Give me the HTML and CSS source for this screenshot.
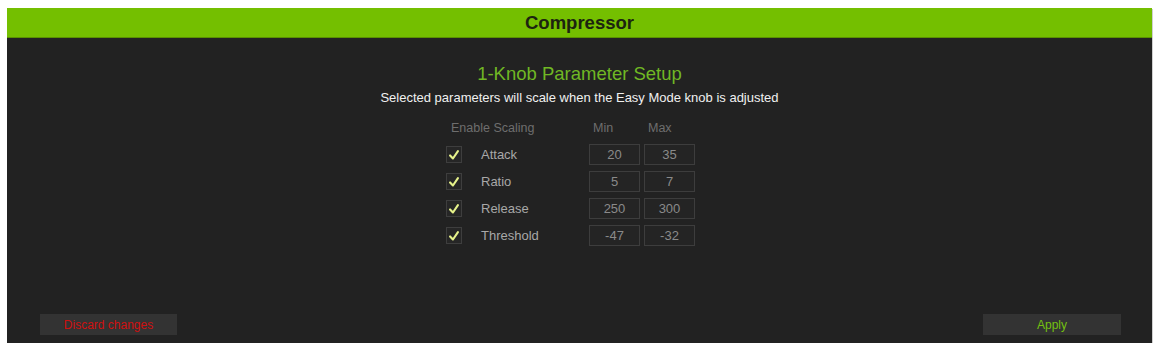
FILE: index.html
```html
<!DOCTYPE html>
<html>
<head>
<meta charset="utf-8">
<link rel="stylesheet" href="styles.css">
</head>
<body>
<div class="panel">
  <div class="header">Compressor</div>
  <div class="content">
    <h1 class="title">1-Knob Parameter Setup</h1>
    <p class="subtitle">Selected parameters will scale when the Easy Mode knob is adjusted</p>
    <div class="table-wrap">
      <div class="table">
        <div class="th th-enable">Enable Scaling</div>
        <div class="th th-min">Min</div>
        <div class="th th-max">Max</div>

        <div class="check"><svg viewBox="0 0 16 16"><path d="M3.5 8.5 L6.8 12 L12.5 3.5" /></svg></div>
        <div class="label">Attack</div>
        <div class="val val-min">20</div>
        <div class="val val-max">35</div>

        <div class="check"><svg viewBox="0 0 16 16"><path d="M3.5 8.5 L6.8 12 L12.5 3.5" /></svg></div>
        <div class="label">Ratio</div>
        <div class="val val-min">5</div>
        <div class="val val-max">7</div>

        <div class="check"><svg viewBox="0 0 16 16"><path d="M3.5 8.5 L6.8 12 L12.5 3.5" /></svg></div>
        <div class="label">Release</div>
        <div class="val val-min">250</div>
        <div class="val val-max">300</div>

        <div class="check"><svg viewBox="0 0 16 16"><path d="M3.5 8.5 L6.8 12 L12.5 3.5" /></svg></div>
        <div class="label">Threshold</div>
        <div class="val val-min">-47</div>
        <div class="val val-max">-32</div>
      </div>
    </div>
  </div>
  <div class="footer">
    <button class="btn btn-discard">Discard changes</button>
    <button class="btn btn-apply">Apply</button>
  </div>
</div>
</body>
</html>
```
FILE: styles.css
```css
html, body {
  margin: 0;
  padding: 0;
  background: #ffffff;
}
body {
  font-family: "Liberation Sans", Arial, sans-serif;
}
.panel {
  margin: 8px 5px 0 7px;
  width: 1145px;
  height: 335px;
  background: #222222;
  display: flex;
  flex-direction: column;
  box-shadow: 1px 1px 0 #cfcfcf;
}
.header {
  height: 30px;
  background: #74bf00;
  color: #1c2410;
  font-weight: bold;
  font-size: 18.5px;
  display: flex;
  align-items: center;
  justify-content: center;
  border-bottom: 1px solid #5a9200;
  box-sizing: border-box;
}
.content {
  flex: 1;
  display: flex;
  flex-direction: column;
  align-items: center;
}
.title {
  margin: 25px 0 0 0;
  font-weight: normal;
  font-size: 18.5px;
  line-height: 21px;
  color: #70b824;
}
.subtitle {
  margin: 6px 0 0 0;
  font-size: 13px;
  line-height: 15px;
  color: #f0f0f0;
}
.table-wrap {
  display: flex;
  justify-content: center;
  width: 100%;
  padding-right: 18px;
  box-sizing: border-box;
  margin-top: 16px;
}
.table {
  display: grid;
  grid-template-columns: 16px 127px 51px 55px;
  grid-template-rows: 17px repeat(4, 21px);
  row-gap: 6px;
  align-items: center;
}
.th {
  font-size: 12.5px;
  color: #6e6e6e;
  align-self: start;
  line-height: 15px;
}
.th-enable {
  grid-column: 1 / 3;
  padding-left: 5px;
}
.th-min { padding-left: 4px; }
.th-max { padding-left: 8px; }
.check {
  width: 16px;
  height: 17px;
  box-sizing: border-box;
  background: #262626;
  border: 1px solid #3e3e3e;
  display: flex;
  align-items: center;
  justify-content: center;
}
.check svg {
  width: 14px;
  height: 14px;
  fill: none;
  stroke: #e6f28a;
  stroke-width: 2.4;
  stroke-linecap: round;
  stroke-linejoin: round;
}
.label {
  font-size: 13px;
  color: #a8a8a8;
  padding-left: 19px;
}
.val {
  height: 21px;
  box-sizing: border-box;
  border: 1px solid #3d3d3d;
  background: #242424;
  color: #8a8a8a;
  font-size: 13px;
  display: flex;
  align-items: center;
  justify-content: center;
}
.val-max { margin-left: 4px; }
.footer {
  display: flex;
  justify-content: space-between;
  padding: 0 31px 8px 33px;
}
.btn {
  width: 137px;
  height: 21px;
  border: none;
  background: #333333;
  font-family: "Liberation Sans", Arial, sans-serif;
  font-size: 12px;
  padding: 0;
  cursor: pointer;
}
.btn-discard { color: #d01010; }
.btn-apply { color: #74c010; width: 138px; }
```
